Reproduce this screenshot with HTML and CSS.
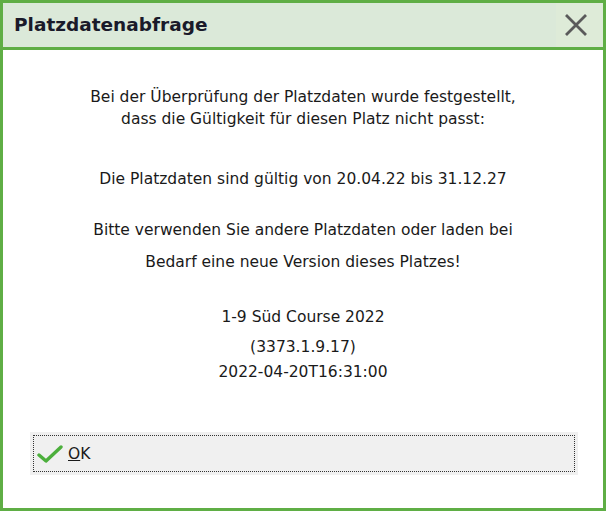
FILE: index.html
```html
<!DOCTYPE html>
<html>
<head>
    <title>Platzdatenabfrage</title>
    <meta charset="utf-8">
    <link rel="stylesheet" href="styles.css">
</head>
<body>
    <div class="dialog">
        <div class="titlebar">
            <h1 class="title">Platzdatenabfrage</h1>
            <div class="close">
                <svg width="24" height="24" viewBox="0 0 24 24"><path d="M2 2 L22 22 M22 2 L2 22" stroke="#5a5a5a" stroke-width="2.8" fill="none"/></svg>
            </div>
        </div>
        <div class="content">
            <p class="msg msg-first">Bei der Überprüfung der Platzdaten wurde festgestellt,<br>dass die Gültigkeit für diesen Platz nicht passt:</p>
            <p class="msg msg-range">Die Platzdaten sind gültig von 20.04.22 bis 31.12.27</p>
            <p class="msg msg-hint">Bitte verwenden Sie andere Platzdaten oder laden bei<br>Bedarf eine neue Version dieses Platzes!</p>
            <p class="msg msg-course">1-9 Süd Course 2022</p>
            <p class="msg msg-id">(3373.1.9.17)</p>
            <p class="msg msg-date">2022-04-20T16:31:00</p>
        </div>
        <div class="buttons">
            <button class="btn-ok">
                <span class="focus">
                    <svg width="26" height="20" viewBox="0 0 26 20"><path d="M2 11 L9 17 L24 3" stroke="#4caf3c" stroke-width="3.4" fill="none" stroke-linecap="round" stroke-linejoin="round"/></svg>
                    <span class="label"><u>O</u>K</span>
                </span>
            </button>
        </div>
    </div>
</body>
</html>
```

FILE: styles.css
```css
html, body {
    margin: 0;
    padding: 0;
}
body {
    font-family: "DejaVu Sans", Verdana, sans-serif;
    color: #1a1a1a;
    background-color: #fff;
}
.dialog {
    width: 606px;
    height: 511px;
    box-sizing: border-box;
    border: 3px solid #5fae45;
    display: flex;
    flex-direction: column;
}
.titlebar {
    height: 44px;
    background-color: #dbe9d9;
    border-bottom: 3px solid #5fae45;
    display: flex;
    align-items: stretch;
}
.title {
    flex: 1;
    margin: 0;
    padding-left: 11px;
    font-size: 18.5px;
    font-weight: bold;
    line-height: 44px;
    color: #1a1a2a;
}
.close {
    width: 47px;
    padding-right: 7px;
    box-sizing: border-box;
    background-color: #deebd8;
    display: flex;
    align-items: center;
    justify-content: center;
}
.content {
    flex: 1;
    text-align: center;
    font-size: 15.5px;
    padding-top: 36px;
}
.msg {
    margin: 0;
    line-height: 22px;
}
.msg-range {
    margin-top: 38px;
}
.msg-hint {
    margin-top: 24px;
    line-height: 32px;
}
.msg-course {
    margin-top: 28px;
}
.msg-id {
    margin-top: 8px;
}
.msg-date {
    margin-top: 3px;
}
.buttons {
    padding: 0 25px 33px 27px;
}
.btn-ok {
    width: 100%;
    height: 43px;
    padding: 3px;
    border: none;
    background-color: #f0f0f0;
    font-family: inherit;
    font-size: 15.5px;
    color: #1a1a1a;
}
.focus {
    display: flex;
    align-items: center;
    height: 100%;
    box-sizing: border-box;
    border: 1px dotted #333;
    padding-left: 3px;
}
.label {
    margin-left: 5px;
}
```
